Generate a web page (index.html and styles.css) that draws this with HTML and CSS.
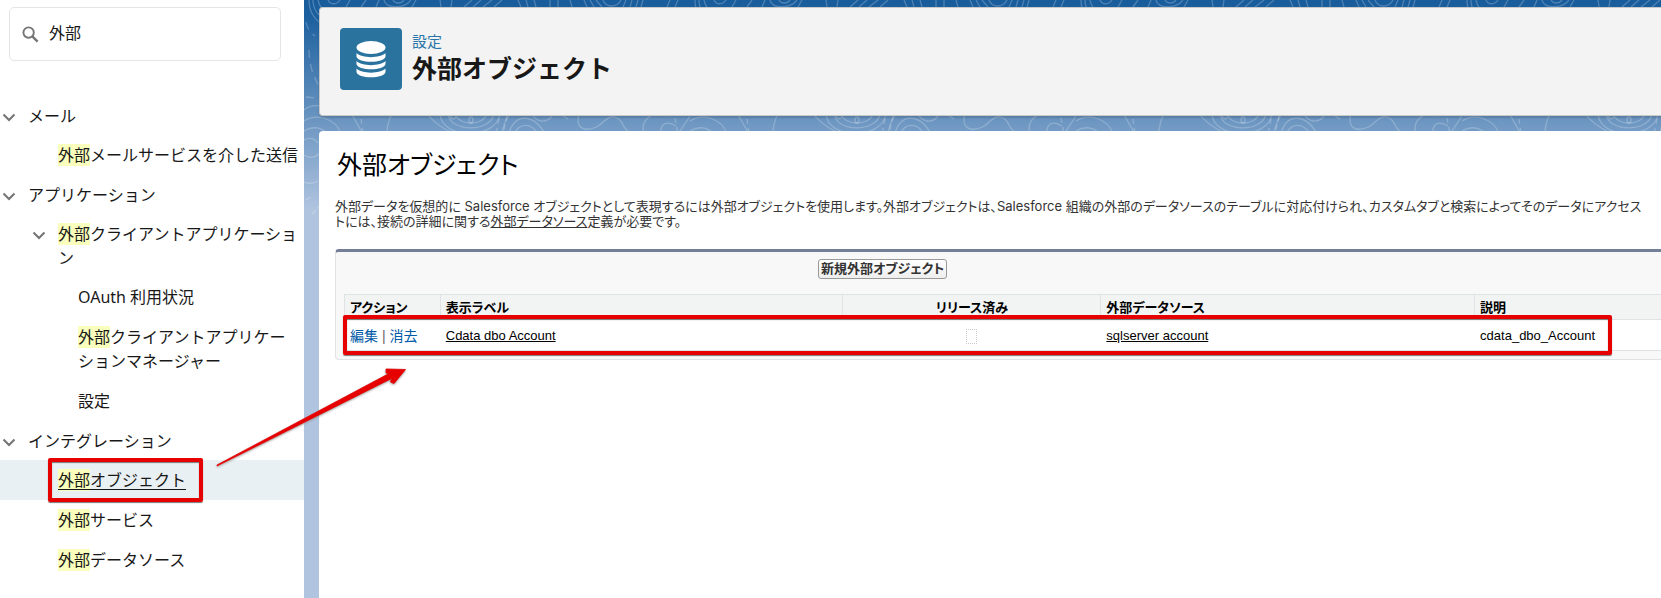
FILE: index.html
```html
<!DOCTYPE html>
<html lang="ja">
<head>
    <meta charset="UTF-8">
    <meta name="viewport" content="width=device-width, initial-scale=1.0">
    <title>外部オブジェクト</title>
    <link rel="stylesheet" href="styles.css">
</head>
<body>
    <!-- 矢印アイコン -->
    <svg class="defs" aria-hidden="true">
        <symbol id="chevron" viewBox="0 0 14 14"><path d="M1.500 4.500 7 10l5.500-5.500" fill="none" stroke="#747474" stroke-width="2"/></symbol>
    </svg>

    <div class="page">
        <!-- サイドメニュー -->
        <nav class="sidebar">
            <div class="search">
                <svg class="search-icon" viewBox="0 0 18 18" aria-hidden="true"><circle cx="7" cy="7" r="5.500" fill="none" stroke="#747474" stroke-width="2"/><path d="M11 11l5.500 5.500" stroke="#747474" stroke-width="2.500"/></svg>
                <input type="text" class="search-input" value="外部" aria-label="クイック検索">
            </div>
            <ul class="tree">
                <li>
                    <button type="button" class="toggle"><svg class="chevron"><use href="#chevron"/></svg><span>メール</span></button>
                    <ul>
                        <li><a class="leaf" href="#"><mark>外部</mark>メールサービスを介した送信</a></li>
                    </ul>
                </li>
                <li>
                    <button type="button" class="toggle"><svg class="chevron"><use href="#chevron"/></svg><span>アプリケーション</span></button>
                    <ul>
                        <li>
                            <button type="button" class="toggle toggle-sub"><svg class="chevron"><use href="#chevron"/></svg><span><mark>外部</mark>クライアントアプリケーション</span></button>
                            <ul>
                                <li><a class="leaf leaf-sub" href="#">OAuth 利用状況</a></li>
                                <li><a class="leaf leaf-sub" href="#"><mark>外部</mark>クライアントアプリケーションマネージャー</a></li>
                                <li><a class="leaf leaf-sub" href="#">設定</a></li>
                            </ul>
                        </li>
                    </ul>
                </li>
                <li>
                    <button type="button" class="toggle"><svg class="chevron"><use href="#chevron"/></svg><span>インテグレーション</span></button>
                    <ul>
                        <li class="selected"><a class="leaf" href="#"><mark>外部</mark>オブジェクト</a><span class="frame frame-menu"></span></li>
                        <li><a class="leaf" href="#"><mark>外部</mark>サービス</a></li>
                        <li><a class="leaf" href="#"><mark>外部</mark>データソース</a></li>
                    </ul>
                </li>
            </ul>
        </nav>

        <!-- メイン -->
        <main class="main">
            <svg class="pattern" aria-hidden="true">
                <defs>
                    <pattern id="topo" width="386" height="240" patternUnits="userSpaceOnUse">
                        <g fill="none" stroke="#fff" stroke-opacity=".22" stroke-width="1.300">
                            <path d="M5 0c0 12 6 22 18 26M9 0c0 9 5 16 12 19M14 0c1 5 3 9 8 11M24 0c2 5 9 5 12 0M46 0l-4 7"/>
                            <path d="M2 22c1 6 4 10 9 14M5 50c0 14 4 26 10 36M2 97l9 1" stroke-dasharray="8 6"/>
                            <path d="M0 110c5-4 10-5 16-4M0 121c12-8 32-3 37 13M0 131c10-6 20-3 24 4M0 140c6-3 11-1 14 3M0 155c6 4 11 3 16-2M0 182c5 2 9 2 14-1"/>
                            <path d="M2 200l6-4M8 214l7-7" stroke-dasharray="5 3"/>
                            <path d="M62 0l-5 7M75 0l-3 7M80 0c2 9 20 9 27 0M89 0c2 4 8 4 11 0M112 0l-4 7M136 0l1 7M148 0l-1 7M168 0l-8 7M177 0l-8 7M188 0l-9 7M198 0l-8 7M214 0l3 7M222 0l2 7M230 0l2 7M246 0v7M254 0v7M266 0l2 7M280 0l3 7M286 0l4 7M292 0l6 7M299 0c3 8 14 8 18 0M322 0l-3 7M328 0l-2 7M334 0l-2 7M339 0l-2 7M366 0l-3 7M374 0l-3 7"/>
                            <path d="M57 119l2 15M195 119l-3 15M203 116l-4 18M371 118l3 16" stroke-dasharray="5 4"/>
                            <path d="M47 113l12 21M88 114c-4 7-5 12-5 20M122 112c6 10 16 16 28 22M136 114c2 26 56 26 60 0M144 114c2 18 42 19 46 0M151 114c4 12 28 12 32 0M146 115c1 5 6 5 6 0M206 114c-5 6-7 13-8 20M205 134c4-20 24-22 36 0M210 134c5-11 17-12 24 0M228 114c4 8 14 10 20 2M256 114l8 5M275 114c-6 22 18 16 24 8 8-8 16-6 20 3 2 4 5 7 9 9M357 134c-1-12 7-13 15-8M340 134c-4-14 8-24 22-18M386 116l-12 18"/>
                            <ellipse cx="167" cy="120" rx="2" ry="3"/>
                        </g>
                    </pattern>
                </defs>
                <rect width="100%" height="240" fill="url(#topo)"/>
            </svg>

            <header class="page-header">
                <div class="header-icon">
                    <svg viewBox="0 0 30 38" aria-hidden="true"><ellipse cx="15" cy="7.500" rx="14.500" ry="6.500" fill="#fff"/><path d="M.5 13c5 5.500 24 5.500 29 0v3.500c-1 7-28 7-29 0zM.5 21c5 5.500 24 5.500 29 0v3c-1 7-28 7-29 0zM.5 28.500c5 5.500 24 5.500 29 0V32c-1 7-28 7-29 0z" fill="#fff"/></svg>
                </div>
                <div>
                    <p class="header-sub">設定</p>
                    <h1 class="header-title">外部オブジェクト</h1>
                </div>
            </header>

            <section class="content">
                <h2 class="content-title">外部オブジェクト</h2>
                <p class="description">外部データを仮想的に Salesforce オブジェクトとして表現するには外部オブジェクトを使用します。外部オブジェクトは、Salesforce 組織の外部のデータソースのテーブルに対応付けられ、カスタムタブと検索によってそのデータにアクセス<br>トには、接続の詳細に関する<a href="#">外部データソース</a>定義が必要です。</p>

                <div class="block">
                    <div class="block-header">
                        <button type="button" class="btn">新規外部オブジェクト</button>
                    </div>
                    <div class="table-wrap">
                        <table class="list">
                            <colgroup>
                                <col class="col-action">
                                <col class="col-label">
                                <col class="col-deployed">
                                <col class="col-source">
                                <col>
                            </colgroup>
                            <thead>
                                <tr>
                                    <th>アクション</th>
                                    <th>表示ラベル</th>
                                    <th class="center">リリース済み</th>
                                    <th>外部データソース</th>
                                    <th>説明</th>
                                </tr>
                            </thead>
                            <tbody>
                                <tr>
                                    <td class="actions"><a href="#">編集</a> | <a href="#">消去</a></td>
                                    <td><a href="#">Cdata dbo Account</a></td>
                                    <td class="center"><input type="checkbox" class="check" aria-label="リリース済み" disabled></td>
                                    <td><a href="#">sqlserver account</a></td>
                                    <td>cdata_dbo_Account</td>
                                </tr>
                            </tbody>
                        </table>
                        <span class="frame frame-row"></span>
                    </div>
                </div>
            </section>
        </main>

        <!-- メニューから一覧への矢印 -->
        <svg class="arrow" viewBox="0 0 192 102" aria-hidden="true"><path d="M1 99 173 7.500l-3-.500V3l19.500.500L178 17.500l-3.500-1.500 1-3.500L1 100z" fill="#e60000" stroke="#e60000" stroke-width=".8"/></svg>
    </div>
</body>
</html>
```
FILE: styles.css
```css
* { box-sizing: border-box; }
body {
    margin: 0;
    font-family: "Noto Sans", "Noto Sans CJK JP", sans-serif;
    font-size: 16px;
    color: #181818;
    background-color: #fff;
}
h1, h2, p, ul { margin: 0; padding: 0; }
ul { list-style: none; }
.defs { display: none; }
.page {
    position: relative;
    display: flex;
    min-height: 100vh;
    overflow: hidden;
}

/* サイドメニュー */
.sidebar {
    flex: 0 0 304px;
    min-width: 0;
    padding-top: 7px;
    line-break: strict;
}
.search {
    display: flex;
    align-items: center;
    gap: 10px;
    height: 54px;
    margin: 0 23px 35px 9px;
    padding: 0 12px;
    border: 1px solid #e5e5e5;
    border-radius: 5px;
}
.search-icon { flex: none; width: 17px; height: 17px; }
.search-input {
    flex: 1;
    min-width: 0;
    height: 40px;
    padding: 0 0 4px;
    border: none;
    outline: none;
    background: none;
    font: inherit;
    color: inherit;
}
.toggle {
    display: flex;
    align-items: flex-start;
    gap: 12px;
    width: 100%;
    padding: 8px 0 7px 2px;
    border: none;
    background: none;
    font: inherit;
    line-height: 24px;
    color: inherit;
    text-align: left;
    white-space: normal;
    overflow-wrap: anywhere;
    cursor: pointer;
}
.toggle span { min-width: 0; }
.toggle-sub { padding-left: 32px; }
.chevron {
    flex: none;
    width: 14px;
    height: 14px;
    margin-top: 6px;
}
.leaf {
    display: block;
    padding: 8px 0 8px 58px;
    line-height: 24px;
    color: inherit;
    text-decoration: none;
}
.leaf-sub { padding-left: 78px; }
mark { background-color: #faffbd; color: inherit; }
.selected { position: relative; background-color: #e8f0f3; }
.selected .leaf { text-decoration: underline; text-underline-offset: 3px; }

/* 赤い枠と矢印 */
.frame {
    position: absolute;
    border: 4px solid #e60000;
    border-radius: 2px;
    box-shadow: 0 1px 1px #777, inset 0 1px 1px #777;
    pointer-events: none;
}
.frame-menu { top: -2px; bottom: -2px; left: 48px; width: 155px; }
.frame-row { top: 21px; bottom: -4px; left: -1px; right: 49px; }
.arrow {
    position: absolute;
    top: 366px;
    left: 216px;
    width: 192px;
    height: 102px;
    filter: drop-shadow(0 1px 1px #999);
    pointer-events: none;
}

/* メイン */
.main {
    position: relative;
    flex: 1;
    display: flex;
    flex-direction: column;
    gap: 15px;
    min-width: 0;
    padding: 7px 0 0 15px;
    background: #b0c4df linear-gradient(#195c9c 0, #1b5f9e 15px, #b0c4df 210px) no-repeat;
}
.pattern {
    position: absolute;
    top: 0;
    left: 0;
    width: 100%;
    height: 240px;
}
.page-header {
    position: relative;
    display: flex;
    gap: 10px;
    height: 109px;
    padding: 20px;
    border: 1px solid #c9c9c9;
    border-right: none;
    border-radius: 4px 0 0 4px;
    background-color: #f3f3f3;
    box-shadow: 0 2px 2px rgba(0, 0, 0, 0.15);
}
.header-icon {
    display: flex;
    align-items: center;
    justify-content: center;
    width: 62px;
    height: 62px;
    border-radius: 4px;
    background-color: #2a739e;
}
.header-icon svg { width: 30px; height: 38px; }
.header-sub {
    padding-top: 3px;
    font-size: 15px;
    line-height: 20px;
    color: #2a76a8;
}
.header-title { font-size: 25px; line-height: 34px; }

.content {
    position: relative;
    flex: 1;
    padding: 16px 0 0 16px;
    border-radius: 4px 0 0 0;
    background-color: #fff;
    font-family: "Liberation Sans", "Noto Sans CJK JP", sans-serif;
    font-size: 13px;
    font-feature-settings: "palt";
}
.content-title {
    padding-left: 2px;
    font-size: 25px;
    font-weight: normal;
    line-height: 36px;
    color: #000;
}
.description {
    margin: 16px 0 20px;
    font-family: Inter, "Noto Sans CJK JP", sans-serif;
    line-height: 15px;
    color: #333;
    white-space: nowrap;
}
.description a { color: #333; }

/* 一覧 */
.block {
    padding: 7px 0 8px 8px;
    border: 1px solid #e0e3e5;
    border-top: 3px solid #747e96;
    border-right: none;
    border-radius: 4px 0 0 4px;
    background-color: #f8f8f8;
}
.block-header { padding: 0 0 15px 36%; }
.btn {
    display: block;
    height: 20px;
    padding: 0 2px;
    border: 1px solid #999;
    border-radius: 3px;
    background: linear-gradient(#fff, #eee);
    font-family: inherit;
    font-size: 13px;
    font-weight: bold;
    line-height: 16px;
    color: #333;
    font-feature-settings: inherit;
    white-space: nowrap;
    cursor: pointer;
}
.table-wrap { position: relative; }
.list {
    width: 100%;
    table-layout: fixed;
    border-collapse: separate;
    border-spacing: 0;
    border-left: 1px solid #e0e3e5;
    color: #000;
}
.col-action { width: 7.2%; }
.col-label { width: 30.6%; }
.col-deployed { width: 19.6%; }
.col-source { width: 28.4%; }
.list th {
    height: 26px;
    padding: 2px 5px 0;
    border: solid #e0e3e5;
    border-width: 1px 0 1px 1px;
    background-color: #f2f3f3;
    line-height: 16px;
    text-align: left;
}
.list th:first-child { border-left: none; }
.list td {
    height: 31px;
    padding: 2px 6px 0;
    border-bottom: 1px solid #e0e3e5;
    background-color: #fff;
    line-height: 16px;
}
.list td a { color: #000; }
.list .center { text-align: center; }
.list .actions { padding: 2px 5px 0; font-size: 14px; color: #666; white-space: nowrap; }
.list .actions a { color: #015ba7; text-decoration: none; }
.check {
    appearance: none;
    display: block;
    width: 11px;
    height: 15px;
    margin: 0 auto;
    border: 1px dotted #ccc;
}
```
